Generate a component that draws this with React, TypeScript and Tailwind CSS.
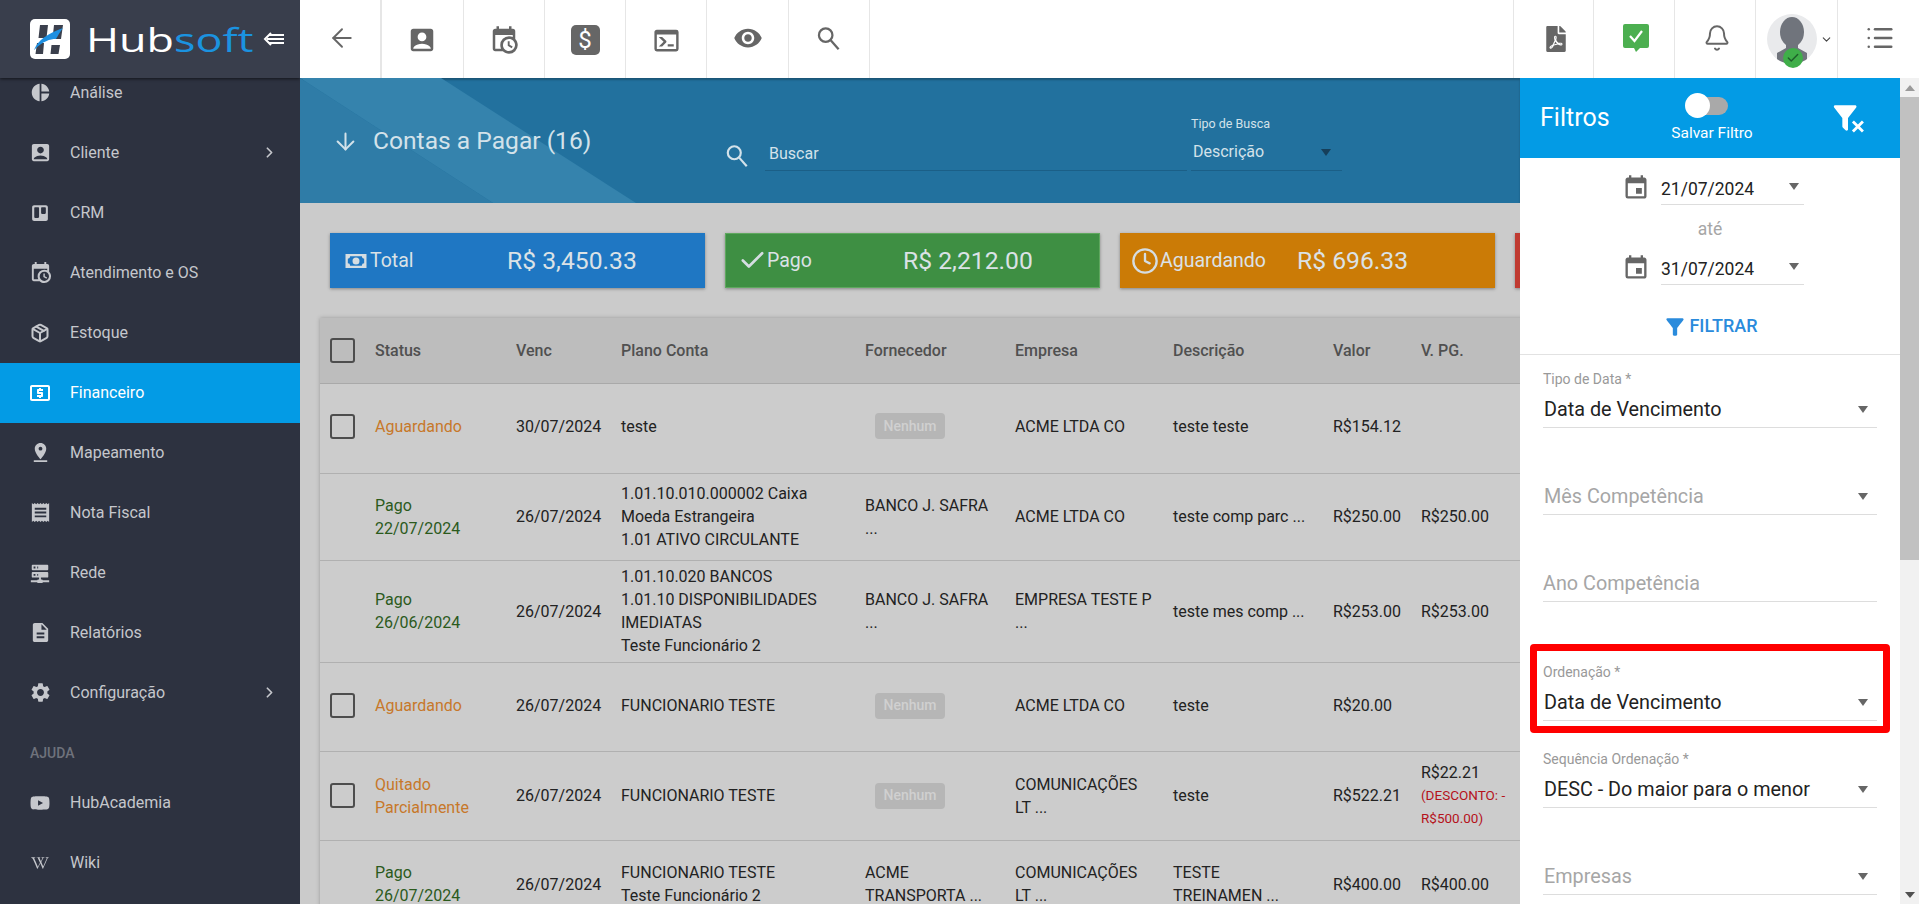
import type { ReactNode } from "react";
import { ArrowDown, ArrowLeft, Bell, Check, ChevronDown, ChevronRight, Clock, List, Package } from "lucide-react";
import { FaFilePdf, FaTrello, FaWikipediaW, FaYoutube } from "react-icons/fa";
import {
  MdAccountBox,
  MdDescription,
  MdEvent,
  MdFilterAlt,
  MdLocalAtm,
  MdPieChart,
  MdPinDrop,
  MdReceipt,
  MdSettings,
  MdVisibility,
} from "react-icons/md";

function MdiIcon({ d, size = 24, className }: { d: string; size?: number; className?: string }) {
  return (
    <svg viewBox="0 0 24 24" width={size} height={size} fill="currentColor" className={className}>
      <path d={d} />
    </svg>
  );
}

function Magnifier({ size, className }: { size: number; className?: string }) {
  return (
    <svg viewBox="0 0 24 24" width={size} height={size} fill="none" stroke="currentColor" strokeWidth="2" className={className}>
      <circle cx="9.500" cy="9" r="6" />
      <path d="M14 13.500 21 21.500" />
    </svg>
  );
}

const CALENDAR_CLOCK =
  "M15,13H16.5V15.82L18.94,17.23L18.19,18.53L15,16.69V13M19,8H5V19H9.67C9.24,18.09 9,17.07 9,16A7,7 0 0,1 16,9C17.07,9 18.09,9.24 19,9.67V8M5,21C3.89,21 3,20.1 3,19V5C3,3.89 3.89,3 5,3H6V1H8V3H16V1H18V3H19A2,2 0 0,1 21,5V11.1C22.24,12.36 23,14.09 23,16A7,7 0 0,1 16,23C14.09,23 12.36,22.24 11.1,21H5M16,11.15A4.85,4.85 0 0,0 11.15,16C11.15,18.68 13.32,20.85 16,20.85A4.85,4.85 0 0,0 20.85,16C20.85,13.32 18.68,11.15 16,11.15Z";
const CONSOLE =
  "M20,19V7H4V19H20M20,3A2,2 0 0,1 22,5V19A2,2 0 0,1 20,21H4A2,2 0 0,1 2,19V5C2,3.89 2.9,3 4,3H20M13,17V15H18V17H13M9.58,13L5.57,9H8.4L11.7,12.3C12.09,12.69 12.09,13.33 11.7,13.72L8.42,17H5.59L9.58,13Z";
const SERVER_NETWORK =
  "M13,19H14A1,1 0 0,1 15,20H22V22H15A1,1 0 0,1 14,23H10A1,1 0 0,1 9,22H2V20H9A1,1 0 0,1 10,19H11V17H4A1,1 0 0,1 3,16V12A1,1 0 0,1 4,11H20A1,1 0 0,1 21,12V16A1,1 0 0,1 20,17H13V19M4,3H20A1,1 0 0,1 21,4V8A1,1 0 0,1 20,9H4A1,1 0 0,1 3,8V4A1,1 0 0,1 4,3M9,7H10V5H9V7M9,15H10V13H9V15M5,5V7H7V5H5M5,13V15H7V13H5Z";
const FILTER_REMOVE =
  "M14.76,20.83L17.6,18L14.76,15.17L16.17,13.76L19,16.57L21.83,13.76L23.24,15.17L20.43,18L23.24,20.83L21.83,22.24L19,19.4L16.17,22.24L14.76,20.83M12,12V19.88C12.04,20.18 11.94,20.5 11.71,20.71C11.32,21.1 10.69,21.1 10.3,20.71L8.29,18.7C8.06,18.47 7.96,18.16 8,17.87V12H7.97L2.21,4.62C1.87,4.19 1.95,3.56 2.38,3.22C2.57,3.08 2.78,3 3,3V3H17V3C17.22,3 17.43,3.08 17.62,3.22C18.05,3.56 18.13,4.19 17.79,4.62L12.03,12H12Z";
const CASH =
  "M3,6H21V18H3V6M12,9A3,3 0 0,1 15,12A3,3 0 0,1 12,15A3,3 0 0,1 9,12A3,3 0 0,1 12,9M7,8A2,2 0 0,1 5,10V14A2,2 0 0,1 7,16H17A2,2 0 0,1 19,14V10A2,2 0 0,1 17,8H7Z";

function Logo() {
  return (
    <div className="flex h-[78px] shrink-0 items-center bg-[#393e4c] pl-[30px] shadow-[0_1px_3px_rgba(0,0,0,0.6)]">
      <svg viewBox="0 0 40 40" width={40} height={40} className="shrink-0">
        <rect width="40" height="40" rx="5" fill="#ffffff" />
        <path d="M10 6h8l-1.5 13H8.5zM7 24h7l-1 11H5.500zM24 6h9l-2 14h-8.500zM21.500 26h8.500l-1.500 9h-8z" fill="#3b404d" />
        <path d="M4 31C8 21 17 15 33 9c-4 5-5 8-7 11-6 0-13 2-22 11z" fill="#1d8fe1" />
      </svg>
      <div className="ml-[16px] flex w-[168px] origin-left scale-x-[1.36] text-[33px] font-normal leading-none font-['Open_Sans',sans-serif]">
        <span className="text-white">Hub</span>
        <span className="text-[#1b93e0]">soft</span>
      </div>
      <svg viewBox="0 0 22 16" width={22} height={16} className="ml-[9px] shrink-0" fill="none" stroke="#ffffff" strokeWidth="2">
        <path d="M8 2 2 8l6 6" />
        <path d="M6 4h15M4 8h17M6 12h15" />
      </svg>
    </div>
  );
}

interface NavEntry {
  label: string;
  icon: ReactNode;
  chevron?: boolean;
  active?: boolean;
}

const mainNav: NavEntry[] = [
  { label: "Análise", icon: <MdPieChart size={21} /> },
  { label: "Cliente", icon: <MdAccountBox size={23} />, chevron: true },
  { label: "CRM", icon: <FaTrello size={18} /> },
  { label: "Atendimento e OS", icon: <MdiIcon d={CALENDAR_CLOCK} size={23} /> },
  { label: "Estoque", icon: <Package size={20} strokeWidth={2.4} /> },
  { label: "Financeiro", icon: <MdLocalAtm size={24} />, active: true },
  { label: "Mapeamento", icon: <MdPinDrop size={23} /> },
  { label: "Nota Fiscal", icon: <MdReceipt size={23} /> },
  { label: "Rede", icon: <MdiIcon d={SERVER_NETWORK} size={22} /> },
  { label: "Relatórios", icon: <MdDescription size={23} /> },
  { label: "Configuração", icon: <MdSettings size={23} />, chevron: true },
];

const helpNav: NavEntry[] = [
  { label: "HubAcademia", icon: <FaYoutube size={20} /> },
  { label: "Wiki", icon: <FaWikipediaW size={18} /> },
];

function NavItem({ entry }: { entry: NavEntry }) {
  return (
    <div
      className={`flex h-[60px] items-center pb-[1px] text-[16px] ${
        entry.active ? "bg-[#039be5] text-white" : "text-[#c5c7cc]"
      }`}
    >
      <span className="flex w-[70px] shrink-0 justify-center pl-[10px]">{entry.icon}</span>
      <span className="flex-1">{entry.label}</span>
      {entry.chevron ? <ChevronRight size={17} strokeWidth={2.4} className="mr-[22px]" /> : null}
    </div>
  );
}

function Sidebar() {
  return (
    <aside className="z-10 flex w-[300px] shrink-0 flex-col overflow-hidden bg-[#2d3240]">
      <Logo />
      <nav className="-mt-[15px]">
        {mainNav.map((entry) => (
          <NavItem key={entry.label} entry={entry} />
        ))}
        <div className="flex h-[50px] items-center pl-[30px] pt-[10px] text-[14px] font-medium text-[#6f727c]">AJUDA</div>
        {helpNav.map((entry) => (
          <NavItem key={entry.label} entry={entry} />
        ))}
      </nav>
    </aside>
  );
}

function BarCell({ children, className = "" }: { children: ReactNode; className?: string }) {
  return (
    <div className={`flex h-full w-[81.3px] shrink-0 items-center justify-center border-r border-[#e6e6e6] text-[#666] ${className}`}>
      {children}
    </div>
  );
}

function TopBar() {
  return (
    <header className="flex h-[78px] shrink-0 bg-white">
      <BarCell className="w-[82.300px] border-r-2 pb-[2px] pl-[3px]">
        <ArrowLeft size={30} strokeWidth={1.5} />
      </BarCell>
      <BarCell className="pt-[2px]">
        <MdAccountBox size={30} />
      </BarCell>
      <BarCell className="pt-[2px]">
        <MdiIcon d={CALENDAR_CLOCK} size={30} />
      </BarCell>
      <BarCell className="pt-[2px]">
        <div className="flex h-[30px] w-[29px] items-center justify-center rounded-[5px] bg-[#666] text-[24px] leading-none text-white">$</div>
      </BarCell>
      <BarCell className="pt-[2px]">
        <MdiIcon d={CONSOLE} size={29} />
      </BarCell>
      <BarCell className="pb-[2px]">
        <MdVisibility size={30} />
      </BarCell>
      <BarCell className="pb-[1px]">
        <Magnifier size={27} />
      </BarCell>
      <div className="ml-auto flex h-full">
        <BarCell className="border-l pl-[6px]">
          <FaFilePdf size={26} />
        </BarCell>
        <BarCell className="pl-[4px] pt-[1px]">
          <svg viewBox="0 0 26 28" width={26} height={28} className="mb-[3px]">
            <path d="M2 0h22a2 2 0 0 1 2 2v20a2 2 0 0 1-2 2h-7l-4 4-2-4H2a2 2 0 0 1-2-2V2a2 2 0 0 1 2-2z" fill="#4caf50" />
            <path d="M7 12l4.500 5L19 7" fill="none" stroke="#ffffff" strokeWidth="2.2" />
          </svg>
        </BarCell>
        <BarCell className="pl-[3px]">
          <Bell size={28} strokeWidth={1.7} className="mb-[3px]" />
        </BarCell>
        <BarCell className="relative justify-start pl-[11px]">
          <div className="relative h-[50px] w-[50px]">
            <div className="h-[50px] w-[50px] overflow-hidden rounded-full bg-[#e9eaec]">
              <svg viewBox="0 0 50 50" width={50} height={50} fill="#70747c">
                <ellipse cx="25" cy="18" rx="12" ry="15" />
                <path d="M19 28h12v6l9 5v11H10V39l9-5z" />
              </svg>
            </div>
            <div className="absolute left-[16px] top-[34px] flex h-[20px] w-[20px] items-center justify-center rounded-full bg-[#3fae49] text-[#1e5f2a]">
              <Check size={14} strokeWidth={2.5} />
            </div>
          </div>
          <ChevronDown size={13} className="ml-[3px] text-[#444]" />
        </BarCell>
        <BarCell className="w-[79px] border-r-0 pl-[3px]">
          <List size={30} strokeWidth={2} className="mb-[3px]" />
        </BarCell>
      </div>
    </header>
  );
}

function Caret({ className = "", color = "border-t-[#666]" }: { className?: string; color?: string }) {
  return <span className={`h-0 w-0 border-x-[5px] border-t-[7px] border-x-transparent ${color} ${className}`} />;
}

function PageHeader() {
  return (
    <div className="relative flex h-[125px] shrink-0 overflow-hidden bg-[#22719e] shadow-[inset_0_2px_2px_rgba(0,0,0,0.25)]">
      <svg viewBox="0 0 340 125" width={340} height={125} className="absolute left-0 top-0">
        <polygon points="0,0 141,0 336,125 193,125" fill="#3583ad" />
        <polygon points="0,0 193,125 0,125" fill="#2f7ca7" />
      </svg>
      <div className="relative flex h-[125px] w-full">
        <ArrowDown size={27} strokeWidth={1.8} className="ml-[32px] mt-[50px] text-[#d3e2ea]" />
        <div className="ml-[14px] mt-[45px] w-[351px] text-[24.6px] leading-[36px] text-[#d3e2ea]">Contas a Pagar (16)</div>
        <Magnifier size={26} className="mt-[65px] text-[#d3e2ea]" />
        <div className="-ml-[1px] ml-[15px] mt-[60px] flex h-[33px] w-[422px] border-b border-[#1b5f87] pl-[4px] text-[16px] leading-[32px] text-[#d3e2ea]">
          Buscar
        </div>
        <div className="ml-[4px] mt-[38px] flex h-[55px] w-[151px] flex-col border-b border-[#1b5f87] text-[#d3e2ea]">
          <span className="text-[12.5px] leading-[16px]">Tipo de Busca</span>
          <div className="mt-[8px] flex items-center justify-between pl-[2px] pr-[11px] text-[16px] leading-[24px]">
            Descrição
            <Caret color="border-t-[#163f5a]" />
          </div>
        </div>
      </div>
    </div>
  );
}

function StatCard({
  icon,
  label,
  value,
  className,
  labelGap = "ml-[2px]",
}: {
  icon: ReactNode;
  label: string;
  value: string;
  className: string;
  labelGap?: string;
}) {
  return (
    <div className={`grid h-[55px] w-[375px] shrink-0 grid-cols-[178px_1fr] items-center shadow-[0_1px_3px_rgba(0,0,0,0.35)] ${className}`}>
      <div className="flex items-center pl-[12px] text-[19.5px] text-[#dbe2e6]">
        {icon}
        <span className={labelGap}>{label}</span>
      </div>
      <div className="-ml-[1px] text-[24.7px] text-[#dbe2e6]">{value}</div>
    </div>
  );
}

function SelectBox() {
  return <div className="h-[25px] w-[25px] rounded-[3px] border-2 border-[#4d4d4d]" />;
}

function Nenhum() {
  return (
    <div className="ml-[10px] flex h-[26px] w-[70px] items-center justify-center rounded-[4px] bg-[#b6b6b6] text-[14px] font-medium text-[#d0d0d0]">
      Nenhum
    </div>
  );
}

interface TableRow {
  height: string;
  check?: boolean;
  status: string[];
  statusColor: string;
  venc: string;
  plano: string[];
  fornecedor: string[] | null;
  empresa: string[];
  descricao: string[];
  valor: string;
  pago: string;
  desconto?: string[];
}

const ORANGE = "text-[#c7782a]";
const GREEN = "text-[#2b5a1c]";

const rows: TableRow[] = [
  {
    height: "h-[90px] [&>td]:pb-[4px]",
    check: true,
    status: ["Aguardando"],
    statusColor: ORANGE,
    venc: "30/07/2024",
    plano: ["teste"],
    fornecedor: null,
    empresa: ["ACME LTDA CO"],
    descricao: ["teste teste"],
    valor: "R$154.12",
    pago: "",
  },
  {
    height: "h-[87px]",
    status: ["Pago", "22/07/2024"],
    statusColor: GREEN,
    venc: "26/07/2024",
    plano: ["1.01.10.010.000002 Caixa", "Moeda Estrangeira", "1.01 ATIVO CIRCULANTE"],
    fornecedor: ["BANCO J. SAFRA", "..."],
    empresa: ["ACME LTDA CO"],
    descricao: ["teste comp parc ..."],
    valor: "R$250.00",
    pago: "R$250.00",
  },
  {
    height: "h-[102px]",
    status: ["Pago", "26/06/2024"],
    statusColor: GREEN,
    venc: "26/07/2024",
    plano: ["1.01.10.020 BANCOS", "1.01.10 DISPONIBILIDADES", "IMEDIATAS", "Teste Funcionário 2"],
    fornecedor: ["BANCO J. SAFRA", "..."],
    empresa: ["EMPRESA TESTE P", "..."],
    descricao: ["teste mes comp ..."],
    valor: "R$253.00",
    pago: "R$253.00",
  },
  {
    height: "h-[89px] [&>td]:pb-[2px]",
    check: true,
    status: ["Aguardando"],
    statusColor: ORANGE,
    venc: "26/07/2024",
    plano: ["FUNCIONARIO TESTE"],
    fornecedor: null,
    empresa: ["ACME LTDA CO"],
    descricao: ["teste"],
    valor: "R$20.00",
    pago: "",
  },
  {
    height: "h-[89px]",
    check: true,
    status: ["Quitado", "Parcialmente"],
    statusColor: ORANGE,
    venc: "26/07/2024",
    plano: ["FUNCIONARIO TESTE"],
    fornecedor: null,
    empresa: ["COMUNICAÇÕES", "LT ..."],
    descricao: ["teste"],
    valor: "R$522.21",
    pago: "R$22.21",
    desconto: ["(DESCONTO: -", "R$500.00)"],
  },
  {
    height: "h-[88px]",
    status: ["Pago", "26/07/2024"],
    statusColor: GREEN,
    venc: "26/07/2024",
    plano: ["FUNCIONARIO TESTE", "Teste Funcionário 2"],
    fornecedor: ["ACME", "TRANSPORTA ..."],
    empresa: ["COMUNICAÇÕES", "LT ..."],
    descricao: ["TESTE", "TREINAMEN ..."],
    valor: "R$400.00",
    pago: "R$400.00",
  },
];

function Lines({ lines }: { lines: string[] }) {
  return (
    <>
      {lines.map((line) => (
        <div key={line}>{line}</div>
      ))}
    </>
  );
}

function AccountsTable() {
  return (
    <div className="ml-[20px] mt-[30px] w-[1300px] shrink-0 bg-[#cccccc] shadow-[0_0_4px_rgba(0,0,0,0.25)]">
      <table className="w-full table-fixed border-collapse text-left text-[16px] leading-[23px] text-[#222]">
        <colgroup>
          <col className="w-[55px]" />
          <col className="w-[141px]" />
          <col className="w-[105px]" />
          <col className="w-[244px]" />
          <col className="w-[150px]" />
          <col className="w-[158px]" />
          <col className="w-[160px]" />
          <col className="w-[88px]" />
          <col />
        </colgroup>
        <thead>
          <tr className="h-[65px] border-b border-[#a9a9a9] bg-[#bdbdbd] font-medium text-[#505050]">
            <th className="pl-[10px] font-medium">
              <SelectBox />
            </th>
            <th className="font-medium">Status</th>
            <th className="font-medium">Venc</th>
            <th className="font-medium">Plano Conta</th>
            <th className="font-medium">Fornecedor</th>
            <th className="font-medium">Empresa</th>
            <th className="font-medium">Descrição</th>
            <th className="font-medium">Valor</th>
            <th className="font-medium">V. PG.</th>
          </tr>
        </thead>
        <tbody>
          {rows.map((row) => (
            <tr key={row.plano.join() + row.venc + row.status.join()} className={`${row.height} border-b border-[#b0b0b0]`}>
              <td className="pl-[10px]">{row.check ? <SelectBox /> : null}</td>
              <td className={row.statusColor}>
                <Lines lines={row.status} />
              </td>
              <td>{row.venc}</td>
              <td>
                <Lines lines={row.plano} />
              </td>
              <td>{row.fornecedor ? <Lines lines={row.fornecedor} /> : <Nenhum />}</td>
              <td>
                <Lines lines={row.empresa} />
              </td>
              <td>
                <Lines lines={row.descricao} />
              </td>
              <td>{row.valor}</td>
              <td>
                {row.pago}
                {row.desconto ? (
                  <div className="text-[13.5px] text-[#b5121b]">
                    <Lines lines={row.desconto} />
                  </div>
                ) : null}
              </td>
              <td />
            </tr>
          ))}
        </tbody>
      </table>
    </div>
  );
}

function DateRow({ value }: { value: string }) {
  return (
    <div className="flex h-[40px] items-end pl-[102px]">
      <MdEvent size={28} className="mb-[3px] text-[#666]" />
      <div className="ml-[11px] flex h-[40px] w-[143px] items-start justify-between border-b border-[#dddddd] text-[17.5px] leading-[48px] text-[#222]">
        {value}
        <Caret className="mr-[5px] mt-[18px]" />
      </div>
    </div>
  );
}

function Field({ label, value, placeholder }: { label?: string; value: string; placeholder?: boolean }) {
  return (
    <div className="flex h-[58px] flex-col border-b border-[#dddddd]">
      <div className="h-[18px] text-[14px] leading-[18px] text-[#999]">{label}</div>
      <div className={`flex flex-1 items-end justify-between pb-[4px] pl-[1px] text-[19.8px] leading-[26px] ${placeholder ? "text-[#a6a6a6]" : "text-[#222]"}`}>
        {value}
        <Caret className="mb-[10px] mr-[9px]" />
      </div>
    </div>
  );
}

function FilterPanel() {
  return (
    <aside className="flex w-[380px] shrink-0 flex-col overflow-hidden bg-white">
      <div className="flex h-[80px] shrink-0 items-center bg-[#039be5] text-white">
        <div className="w-[136px] pl-[20px] text-[25px]">Filtros</div>
        <div className="flex w-[100px] flex-col items-center">
          <div className="relative h-[25px] w-[43px]">
            <div className="absolute left-[7px] top-[4px] h-[18px] w-[36px] rounded-full bg-[#a9a9a9]" />
            <div className="absolute left-0 top-0 h-[25px] w-[25px] rounded-full bg-white" />
          </div>
          <span className="mt-[5px] whitespace-nowrap pl-[12px] text-[15.500px] leading-[20px]">Salvar Filtro</span>
        </div>
        <MdiIcon d={FILTER_REMOVE} size={34} className="ml-[75px]" />
      </div>
      <div className="flex h-[197px] shrink-0 flex-col border-b border-[#e2e2e2] pt-[7px]">
        <DateRow value="21/07/2024" />
        <div className="h-[40px] text-center text-[17.5px] leading-[48px] text-[#a6a6a6]">até</div>
        <DateRow value="31/07/2024" />
        <div className="mt-[27px] flex items-center justify-center text-[18px] font-medium leading-[24px] text-[#2a8bdc]">
          <MdFilterAlt size={26} className="mt-[2px]" />
          <span className="ml-[1px]">FILTRAR</span>
        </div>
      </div>
      <div className="flex flex-col gap-[29px] pl-[23px] pr-[23px] pt-[15px]">
        <Field label="Tipo de Data *" value="Data de Vencimento" />
        <Field value="Mês Competência" placeholder />
        <div className="flex h-[58px] flex-col justify-between border-b border-[#dddddd]">
          <div />
          <div className="pb-[4px] text-[19.8px] leading-[26px] text-[#a6a6a6]">Ano Competência</div>
        </div>
        <div className="relative mt-[32px]">
          <Field label="Ordenação *" value="Data de Vencimento" />
          <div className="pointer-events-none absolute -bottom-[12px] -left-[13px] -right-[13px] -top-[19px] rounded-[4px] border-[7px] border-[#ff0000]" />
        </div>
        <Field label="Sequência Ordenação *" value="DESC - Do maior para o menor" />
        <Field value="Empresas" placeholder />
      </div>
    </aside>
  );
}

function Scrollbar() {
  return (
    <div className="flex w-[19px] shrink-0 flex-col bg-[#f1f1f1]">
      <div className="flex h-[19px] items-center justify-center">
        <span className="h-0 w-0 border-x-[5px] border-b-[6px] border-x-transparent border-b-[#9a9a9a]" />
      </div>
      <div className="h-[463px] bg-[#c1c1c1]" />
      <div className="flex-1" />
      <div className="flex h-[19px] items-center justify-center">
        <span className="h-0 w-0 border-x-[5px] border-t-[6px] border-x-transparent border-t-[#505050]" />
      </div>
    </div>
  );
}

export default function App() {
  return (
    <div className="flex h-screen w-full overflow-hidden bg-white font-[Roboto,sans-serif]">
      <Sidebar />
      <div className="flex min-w-0 flex-1 flex-col">
        <TopBar />
        <div className="flex min-h-0 flex-1">
          <main className="flex min-w-0 flex-1 flex-col overflow-hidden bg-[#cbcbcb]">
            <PageHeader />
            <div className="flex shrink-0 gap-[20px] pl-[30px] pt-[30px]">
              <StatCard className="bg-[#1f77c3]" icon={<MdiIcon d={CASH} size={28} className="text-[#d5dde2]" />} label="Total" value="R$ 3,450.33" labelGap="ml-0" />
              <StatCard
                className="border border-[#5fa85f] bg-[#3e8f43]"
                icon={<Check size={29} strokeWidth={2.2} className="text-[#d5dde2]" />}
                label="Pago"
                value="R$ 2,212.00"
                labelGap="ml-0"
              />
              <StatCard className="bg-[#cb7b06]" icon={<Clock size={28} strokeWidth={2} className="-ml-[1px] text-[#d5dde2]" />} label="Aguardando" value="R$ 696.33" labelGap="ml-[1px]" />
              <StatCard className="bg-[#c03b32]" icon={null} label="" value="" />
            </div>
            <AccountsTable />
          </main>
          <FilterPanel />
          <Scrollbar />
        </div>
      </div>
    </div>
  );
}
